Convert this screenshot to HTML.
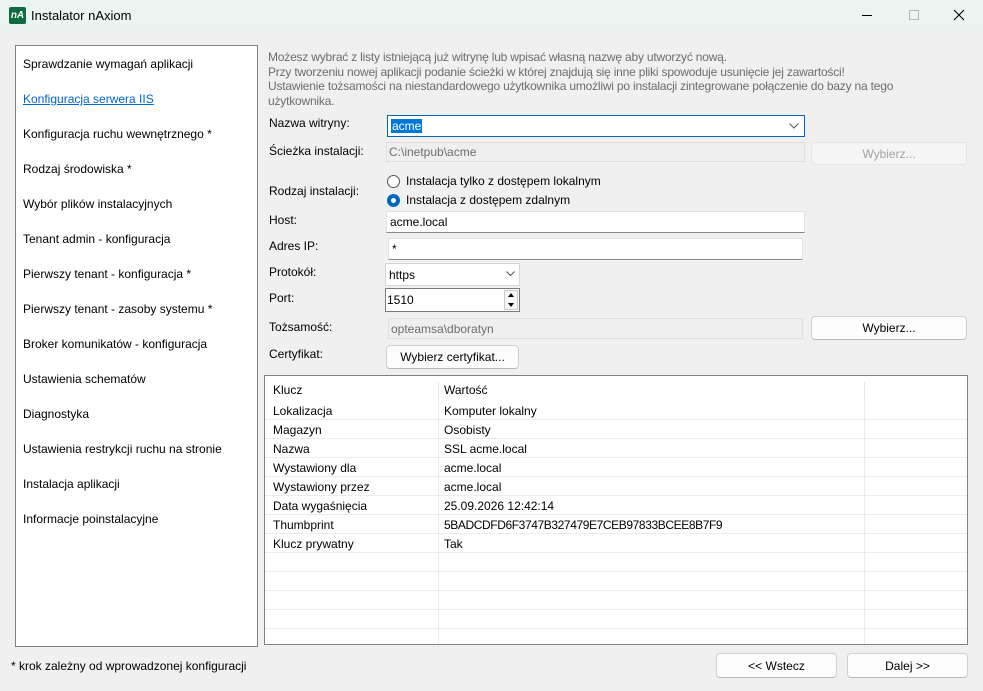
<!DOCTYPE html>
<html><head><meta charset="utf-8"><style>
*{box-sizing:border-box;margin:0;padding:0}
body{width:983px;height:691px;overflow:hidden;background:#f0f0f0;font-family:"Liberation Sans",sans-serif;font-size:12px;color:#000;position:relative}
.a{position:absolute;white-space:nowrap}
.t{letter-spacing:0}
.inp{position:absolute;background:#fff;border:1px solid #e3e3e3;border-bottom:1px solid #8a8a8a;padding:0 3px;display:flex;align-items:center}
.dis{position:absolute;background:#efefef;border:1px solid #e0e0e0;color:#6d6d6d;padding:0 2px;display:flex;align-items:center}
.btn{position:absolute;background:#fdfdfd;border:1px solid #d0d0d0;border-bottom-color:#b8b8b8;border-radius:4px;display:flex;align-items:center;justify-content:center}
.lbl{position:absolute;left:269px}
.nav{position:absolute;left:23px}
</style></head><body>
<div class="a" style="left:0;top:0;width:983px;height:31px;background:#ecf4f1"></div>
<div class="a" style="left:9px;top:7px;width:17px;height:17px;background:#0f6a3e;border-radius:2px;color:#fff;font-size:10px;font-style:italic;font-weight:bold;line-height:17px;text-align:center">nA</div>
<div class="a t" style="left:31px;top:8px;font-size:13px">Instalator nAxiom</div>
<div class="a" style="left:862px;top:15px;width:10px;height:1px;background:#000"></div>
<div class="a" style="left:909px;top:10px;width:10px;height:10px;border:1px solid #b8b8b8"></div>
<svg class="a" style="left:953px;top:9px" width="12" height="12"><path d="M1 1L11 11M11 1L1 11" stroke="#000" stroke-width="1.1"/></svg>

<div class="a" style="left:15px;top:45px;width:243px;height:602px;background:#fff;border:1px solid #828282"></div>
<div class="nav t" style="top:57px">Sprawdzanie wymagań aplikacji</div>
<div class="nav t" style="top:92px;color:#0066cc;text-decoration:underline">Konfiguracja serwera IIS</div>
<div class="nav t" style="top:127px">Konfiguracja ruchu wewnętrznego *</div>
<div class="nav t" style="top:162px">Rodzaj środowiska *</div>
<div class="nav t" style="top:197px">Wybór plików instalacyjnych</div>
<div class="nav t" style="top:232px">Tenant admin - konfiguracja</div>
<div class="nav t" style="top:267px">Pierwszy tenant - konfiguracja *</div>
<div class="nav t" style="top:302px">Pierwszy tenant - zasoby systemu *</div>
<div class="nav t" style="top:337px">Broker komunikatów - konfiguracja</div>
<div class="nav t" style="top:372px">Ustawienia schematów</div>
<div class="nav t" style="top:407px">Diagnostyka</div>
<div class="nav t" style="top:442px">Ustawienia restrykcji ruchu na stronie</div>
<div class="nav t" style="top:477px">Instalacja aplikacji</div>
<div class="nav t" style="top:512px">Informacje poinstalacyjne</div>
<div class="a t" style="left:11px;top:659px">* krok zależny od wprowadzonej konfiguracji</div>

<div class="a" style="left:268px;top:50px;color:#6d6d6d;line-height:14.7px;letter-spacing:-0.2px">Możesz wybrać z listy istniejącą już witrynę lub wpisać własną nazwę aby utworzyć nową.<br>Przy tworzeniu nowej aplikacji podanie ścieżki w której znajdują się inne pliki spowoduje usunięcie jej zawartości!<br>Ustawienie tożsamości na niestandardowego użytkownika umożliwi po instalacji zintegrowane połączenie do bazy na tego<br>użytkownika.</div>

<div class="lbl t" style="top:116px">Nazwa witryny:</div>
<div class="inp" style="left:387px;top:115px;width:418px;height:22px;border:1px solid #0067c0"><span style="background:#0078d7;color:#fff;padding:0 1px">acme</span></div>
<svg class="a" style="left:789px;top:123px" width="10" height="6"><path d="M0.5 0.5L5 5L9.5 0.5" fill="none" stroke="#555"/></svg>

<div class="lbl t" style="top:144px">Ścieżka instalacji:</div>
<div class="dis" style="left:386px;top:142px;width:419px;height:20px">C:\inetpub\acme</div>
<div class="btn" style="left:811px;top:142px;width:156px;height:23px;background:#f5f5f5;border-color:#e5e5e5;color:#a0a0a0">Wybierz...</div>

<div class="lbl t" style="top:184px">Rodzaj instalacji:</div>
<div class="a" style="left:387px;top:175px;width:13px;height:13px;border:1px solid #555;border-radius:50%;background:#fff"></div>
<div class="a t" style="left:406px;top:174px">Instalacja tylko z dostępem lokalnym</div>
<div class="a" style="left:387px;top:194px;width:13px;height:13px;border-radius:50%;background:#0067c0"><div style="position:absolute;left:4px;top:4px;width:5px;height:5px;border-radius:50%;background:#fff"></div></div>
<div class="a t" style="left:406px;top:193px">Instalacja z dostępem zdalnym</div>

<div class="lbl t" style="top:213px">Host:</div>
<div class="inp" style="left:386px;top:211px;width:419px;height:22px">acme.local</div>
<div class="lbl t" style="top:239px">Adres IP:</div>
<div class="inp" style="left:388px;top:238px;width:415px;height:22px;align-items:flex-start;padding-top:3px">*</div>
<div class="lbl t" style="top:265px">Protokół:</div>
<div class="inp" style="left:385px;top:263px;width:135px;height:23px;border:1px solid #d5d5d5">https</div>
<svg class="a" style="left:506px;top:271px" width="9" height="6"><path d="M0.5 0.5L4.5 4.5L8.5 0.5" fill="none" stroke="#555"/></svg>
<div class="lbl t" style="top:291px">Port:</div>
<div class="inp" style="left:385px;top:288px;width:135px;height:24px;border:1px solid #7a7a7a;padding-left:1px">1510</div>
<div class="a" style="left:504px;top:290px;width:14px;height:20px;border:1px solid #c8c8c8;background:#f8f8f8"></div>
<svg class="a" style="left:507px;top:292px" width="8" height="16"><path d="M1 5L4 1L7 5Z M1 11L4 15L7 11Z" fill="#000"/></svg>

<div class="lbl t" style="top:320px">Tożsamość:</div>
<div class="dis" style="left:388px;top:318px;width:415px;height:21px">opteamsa\dboratyn</div>
<div class="btn" style="left:811px;top:316px;width:156px;height:24px">Wybierz...</div>
<div class="lbl t" style="top:347px">Certyfikat:</div>
<div class="btn" style="left:386px;top:345px;width:133px;height:24px">Wybierz certyfikat...</div>

<div class="a" style="left:264px;top:375px;width:704px;height:270px;background:#fff;border:1px solid #828282;overflow:hidden">
<div class="a" style="left:173px;top:6px;width:1px;height:19px;background:#e5e5e5"></div>
<div class="a" style="left:599px;top:6px;width:1px;height:19px;background:#e5e5e5"></div>
<div class="a" style="left:173px;top:25px;width:1px;height:245px;background:#ececec"></div>
<div class="a" style="left:599px;top:25px;width:1px;height:245px;background:#ececec"></div>
<div class="a t" style="left:8px;top:7px">Klucz</div><div class="a t" style="left:179px;top:7px">Wartość</div>
</div>

<div class="btn" style="left:716px;top:653px;width:121px;height:25px">&lt;&lt; Wstecz</div>
<div class="btn" style="left:847px;top:653px;width:121px;height:25px">Dalej &gt;&gt;</div>

<div style="position:absolute;left:265px;top:401px;width:702px">
<div class="a" style="left:0;top:18px;width:702px;height:1px;background:#ececec"></div>
<div class="a" style="left:0;top:37px;width:702px;height:1px;background:#ececec"></div>
<div class="a" style="left:0;top:56px;width:702px;height:1px;background:#ececec"></div>
<div class="a" style="left:0;top:75px;width:702px;height:1px;background:#ececec"></div>
<div class="a" style="left:0;top:94px;width:702px;height:1px;background:#ececec"></div>
<div class="a" style="left:0;top:113px;width:702px;height:1px;background:#ececec"></div>
<div class="a" style="left:0;top:132px;width:702px;height:1px;background:#ececec"></div>
<div class="a" style="left:0;top:151px;width:702px;height:1px;background:#ececec"></div>
<div class="a" style="left:0;top:170px;width:702px;height:1px;background:#ececec"></div>
<div class="a" style="left:0;top:189px;width:702px;height:1px;background:#ececec"></div>
<div class="a" style="left:0;top:208px;width:702px;height:1px;background:#ececec"></div>
<div class="a" style="left:0;top:227px;width:702px;height:1px;background:#ececec"></div>
<div class="a t" style="left:8px;top:3px">Lokalizacja</div><div class="a t" style="left:179px;top:3px">Komputer lokalny</div>
<div class="a t" style="left:8px;top:22px">Magazyn</div><div class="a t" style="left:179px;top:22px">Osobisty</div>
<div class="a t" style="left:8px;top:41px">Nazwa</div><div class="a t" style="left:179px;top:41px">SSL acme.local</div>
<div class="a t" style="left:8px;top:60px">Wystawiony dla</div><div class="a t" style="left:179px;top:60px">acme.local</div>
<div class="a t" style="left:8px;top:79px">Wystawiony przez</div><div class="a t" style="left:179px;top:79px">acme.local</div>
<div class="a t" style="left:8px;top:98px">Data wygaśnięcia</div><div class="a t" style="left:179px;top:98px">25.09.2026 12:42:14</div>
<div class="a t" style="left:8px;top:117px">Thumbprint</div><div class="a t" style="left:179px;top:117px;letter-spacing:-0.4px">5BADCDFD6F3747B327479E7CEB97833BCEE8B7F9</div>
<div class="a t" style="left:8px;top:136px">Klucz prywatny</div><div class="a t" style="left:179px;top:136px">Tak</div>
</div>
</body></html>
